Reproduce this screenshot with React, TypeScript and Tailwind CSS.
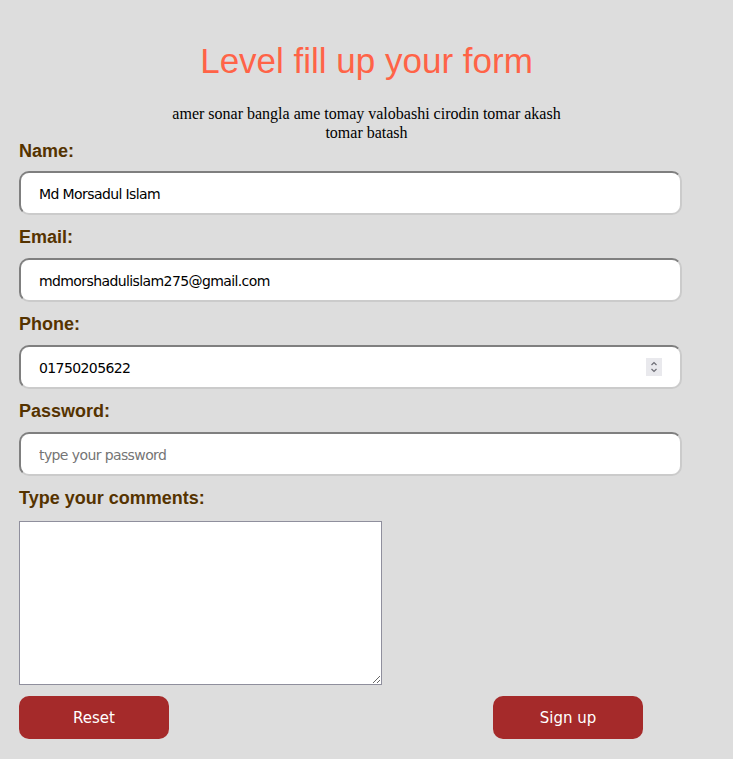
import React from "react";

const inputCls =
  "block w-[663px] h-[44px] rounded-[10px] border-2 border-t-[#7f7f7f] border-l-[#7f7f7f] border-b-[#cbcbcb] border-r-[#cbcbcb] bg-white pl-[18px] pt-[2px] text-[14px] tracking-[-0.6px] text-black outline-none placeholder:text-[#757575] [font-family:'DejaVu_Sans',Verdana,sans-serif]";

const labelCls =
  "block text-[18px] font-bold text-[#553300] leading-[20px] [font-family:'Liberation_Sans',Arial,sans-serif]";

export default function App() {
  return (
    <div className="min-h-[759px] w-full bg-[#dddddd] pt-[40px]">
      <h1 className="text-center text-[35px] leading-[42px] text-[#ff6347] [font-family:'Liberation_Sans',Arial,sans-serif]">
        Level fill up your form
      </h1>
      <p className="mx-auto mt-[22px] w-[400px] text-center text-[16px] leading-[19px] text-black [font-family:'Liberation_Serif','Times_New_Roman',serif]">
        amer sonar bangla ame tomay valobashi cirodin tomar akash tomar batash
      </p>
      <form className="ml-[19px] mt-[-1px]">
        <label className={labelCls}>Name:</label>
        <input className={inputCls + " mt-[10px]"} defaultValue="Md Morsadul Islam" />
        <label className={labelCls + " mt-[12px]"}>Email:</label>
        <input className={inputCls + " mt-[11px]"} defaultValue="mdmorshadulislam275@gmail.com" />
        <label className={labelCls + " mt-[12px]"}>Phone:</label>
        <div className="relative mt-[11px] w-[663px]">
          <input className={inputCls} defaultValue="01750205622" />
          <div className="absolute right-[20px] top-[13px] flex h-[18px] w-[16px] flex-col items-center justify-center bg-[#e9e9ed]">
            <svg width="10" height="14" viewBox="0 0 10 14" fill="none" stroke="#6d6d75" strokeWidth="1.2">
              <path d="M2.5 5 L5 2.5 L7.5 5" />
              <path d="M2.5 9 L5 11.5 L7.5 9" />
            </svg>
          </div>
        </div>
        <label className={labelCls + " mt-[12px]"}>Password:</label>
        <input type="password" className={inputCls + " mt-[11px]"} placeholder="type your password" />
        <label className={labelCls + " mt-[12px]"}>Type your comments:</label>
        <textarea className="mt-[13px] block h-[164px] w-[363px] resize border border-[#8f8f9d] bg-white outline-none" />
        <div className="mt-[11px] flex w-[624px] justify-between">
          <button type="button" className="h-[43px] w-[150px] rounded-[10px] bg-[#a52a2a] pt-[2px] text-[15px] text-white [font-family:'DejaVu_Sans',Verdana,sans-serif]">
            Reset
          </button>
          <button type="button" className="h-[43px] w-[150px] rounded-[10px] bg-[#a52a2a] pt-[2px] text-[15px] text-white [font-family:'DejaVu_Sans',Verdana,sans-serif]">
            Sign up
          </button>
        </div>
      </form>
    </div>
  );
}
